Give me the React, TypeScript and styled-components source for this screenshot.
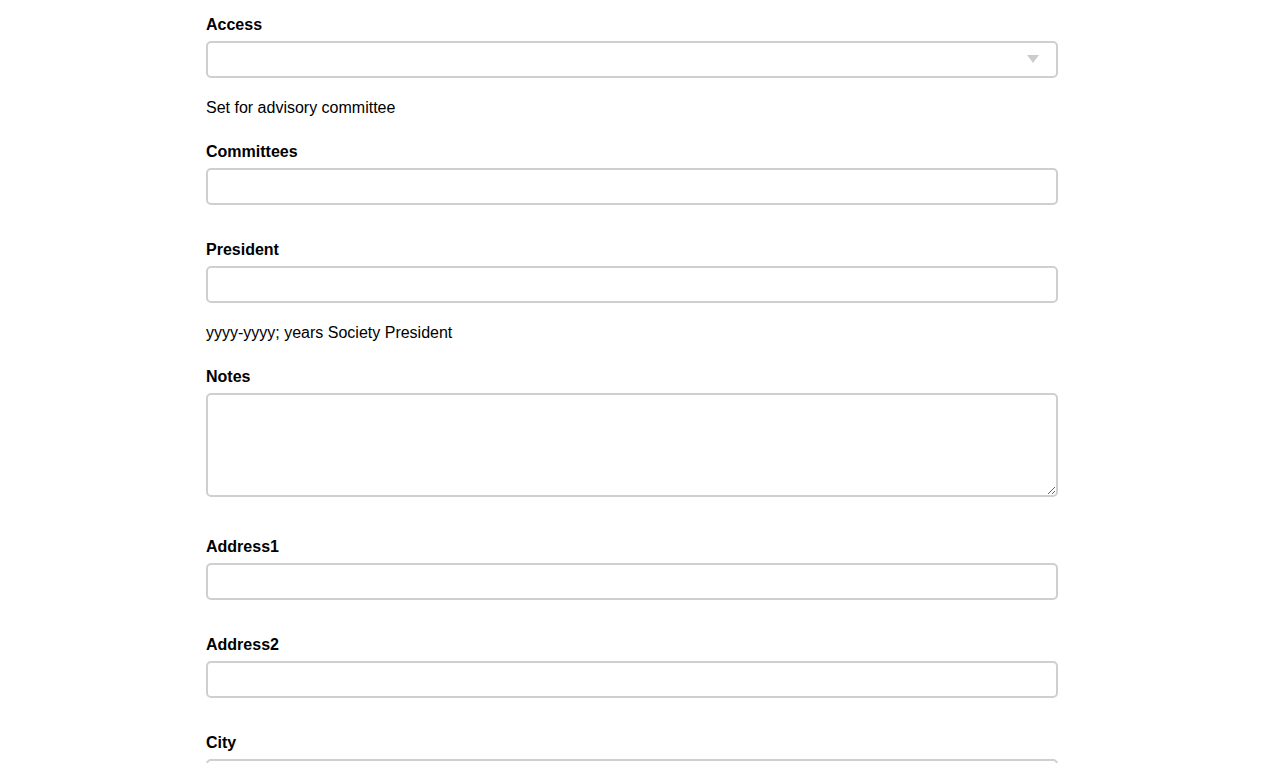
import styled, { createGlobalStyle } from 'styled-components';

const GlobalStyle = createGlobalStyle`
  html, body {
    margin: 0;
    padding: 0;
    overflow: hidden;
    background: #fff;
  }
  body {
    font-family: "Liberation Sans", Arial, Helvetica, sans-serif;
    color: #000;
  }
`;

const Form = styled.form`
  width: 852px;
  margin: 0 auto;
  padding-top: 15px;
`;

const Field = styled.div<{ $hasHelp?: boolean }>`
  display: flex;
  flex-direction: column;
  padding-bottom: ${(p) => (p.$hasHelp ? '22px' : '35px')};
`;

const Label = styled.label`
  font-size: 16px;
  font-weight: bold;
  line-height: 20px;
  margin-bottom: 6px;
`;

const inputBase = `
  box-sizing: border-box;
  width: 100%;
  border: 2px solid #cfcfcf;
  border-radius: 5px;
  background: #fff;
  font-family: "Liberation Sans", Arial, sans-serif;
  font-size: 16px;
  outline: none;
`;

const TextInput = styled.input`
  ${inputBase}
  height: 37px;
  padding: 0 10px;
  display: block;
`;

const SelectWrap = styled.div`
  position: relative;
`;

const Select = styled.select`
  ${inputBase}
  height: 37px;
  padding: 0 10px;
  display: block;
  appearance: none;
  -webkit-appearance: none;
`;

const Caret = styled.span`
  position: absolute;
  right: 19px;
  top: 14px;
  width: 0;
  height: 0;
  border-left: 6px solid transparent;
  border-right: 6px solid transparent;
  border-top: 8px solid #cccccc;
  pointer-events: none;
`;

const TextArea = styled.textarea`
  ${inputBase}
  height: 104px;
  padding: 8px 10px;
  display: block;
  resize: vertical;
  margin-bottom: 5px;
`;

const Help = styled.p`
  margin: 18px 0 0;
  font-size: 16px;
  line-height: 24px;
`;

export default function App() {
  return (
    <>
      <GlobalStyle />
      <Form onSubmit={(e) => e.preventDefault()}>
        <Field $hasHelp>
          <Label htmlFor="access">Access</Label>
          <SelectWrap>
            <Select id="access" defaultValue="">
              <option value=""></option>
            </Select>
            <Caret />
          </SelectWrap>
          <Help>Set for advisory committee</Help>
        </Field>
        <Field>
          <Label htmlFor="committees">Committees</Label>
          <TextInput id="committees" type="text" />
        </Field>
        <Field $hasHelp>
          <Label htmlFor="president">President</Label>
          <TextInput id="president" type="text" />
          <Help>yyyy-yyyy; years Society President</Help>
        </Field>
        <Field>
          <Label htmlFor="notes">Notes</Label>
          <TextArea id="notes" />
        </Field>
        <Field>
          <Label htmlFor="address1">Address1</Label>
          <TextInput id="address1" type="text" />
        </Field>
        <Field>
          <Label htmlFor="address2">Address2</Label>
          <TextInput id="address2" type="text" />
        </Field>
        <Field>
          <Label htmlFor="city">City</Label>
          <TextInput id="city" type="text" />
        </Field>
      </Form>
    </>
  );
}
